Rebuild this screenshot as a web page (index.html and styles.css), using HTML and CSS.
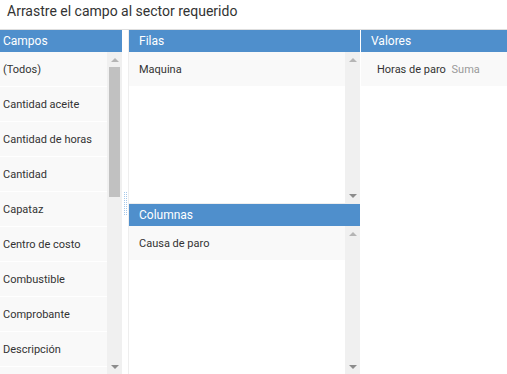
FILE: index.html
```html
<!DOCTYPE html>
<html lang="es">
<head>
<meta charset="utf-8">
<title>Field chooser</title>
<link rel="stylesheet" href="styles.css">
</head>
<body>
<div class="title">Arrastre el campo al sector requerido</div>
<div class="main">
  <section class="campos">
    <div class="hdr hdr-campos">Campos</div>
    <div class="body">
      <ul class="list list-campos">
        <li>(Todos)</li>
        <li>Cantidad aceite</li>
        <li>Cantidad de horas</li>
        <li>Cantidad</li>
        <li>Capataz</li>
        <li>Centro de costo</li>
        <li>Combustible</li>
        <li>Comprobante</li>
        <li>Descripción</li>
        <li class="empty"></li>
      </ul>
      <div class="sb">
        <div class="sb-btn"><span class="tri-up"></span></div>
        <div class="sb-track"><div class="sb-thumb"></div></div>
        <div class="sb-btn"><span class="tri-down"></span></div>
      </div>
    </div>
  </section>
  <div class="splitter"><span class="grip"></span></div>
  <section class="middle">
    <div class="area filas">
      <div class="hdr">Filas</div>
      <div class="body">
        <ul class="list list-area">
          <li>Maquina</li>
        </ul>
        <div class="sb">
          <div class="sb-btn"><span class="tri-up"></span></div>
          <div class="sb-track"></div>
          <div class="sb-btn"><span class="tri-down"></span></div>
        </div>
      </div>
    </div>
    <div class="area columnas">
      <div class="hdr">Columnas</div>
      <div class="body">
        <ul class="list list-area">
          <li>Causa de paro</li>
        </ul>
        <div class="sb">
          <div class="sb-btn"><span class="tri-up"></span></div>
          <div class="sb-track"></div>
          <div class="sb-btn"><span class="tri-down"></span></div>
        </div>
      </div>
    </div>
  </section>
  <section class="valores">
    <div class="hdr hdr-valores">Valores</div>
    <div class="body">
      <ul class="list list-valores">
        <li>Horas de paro <span class="summary">Suma</span></li>
      </ul>
    </div>
  </section>
</div>
</body>
</html>
```

FILE: styles.css
```css
* { box-sizing: border-box; }
html, body {
  margin: 0;
  padding: 0;
  width: 507px;
  height: 374px;
  overflow: hidden;
  background: #fff;
  font-family: Roboto, "Liberation Sans", sans-serif;
  color: #333;
}
.title {
  height: 30px;
  padding-left: 7px;
  font-size: 14px;
  line-height: 22px;
  border-bottom: 1px solid #dedede;
  color: #333;
}
.main {
  display: grid;
  grid-template-columns: 122px 6px 232px 1px 146px;
  grid-template-areas: "campos split middle gap valores";
  height: 344px;
}
.campos { grid-area: campos; display: flex; flex-direction: column; min-height: 0; }
.splitter { grid-area: split; display: flex; align-items: flex-start; padding-top: 162px; padding-left: 2px; }
.middle { grid-area: middle; border-left: 1px solid #eee; display: flex; flex-direction: column; min-height: 0; }
.valores { grid-area: valores; display: flex; flex-direction: column; }

.grip {
  display: block;
  width: 3px;
  height: 23px;
  background-image:
    linear-gradient(to right, transparent 1px, #fff 1px),
    linear-gradient(to bottom, #a6c8ea 1px, transparent 1px);
  background-size: 2px 2px;
}

.hdr {
  height: 22px;
  flex: none;
  background: #4f8fcc;
  color: #fff;
  font-size: 12px;
  line-height: 23px;
  padding-left: 10px;
}
.hdr-campos { padding-left: 3px; }

.body {
  flex: 1;
  display: flex;
  min-height: 0;
  overflow: hidden;
}
.list {
  list-style: none;
  margin: 0;
  padding: 0;
  flex: 1;
  min-width: 0;
  overflow: hidden;
}
.list li {
  height: 35px;
  padding-top: 2px;
  line-height: 32px;
  font-size: 11px;
  background: #f9f9f9;
  border-bottom: 1px solid #fff;
  white-space: nowrap;
  color: #333;
}
.list-campos li { padding-left: 3px; }
.list-area li { padding-left: 10px; }
.list-valores li { padding-left: 16px; }
.summary { color: #999; margin-left: 3px; }

.filas { flex: none; height: 174px; display: flex; flex-direction: column; border-bottom: 1px solid #eee; }
.columnas { flex: 1; display: flex; flex-direction: column; min-height: 0; }

.sb {
  width: 15px;
  flex: none;
  background: #f0f0f0;
  display: flex;
  flex-direction: column;
}
.sb-btn {
  height: 15px;
  flex: none;
  display: flex;
  align-items: center;
  justify-content: center;
}
.sb-track { flex: 1; padding: 0 2px; }
.sb-thumb { height: 130px; background: #c1c1c1; }
.tri-up {
  width: 0; height: 0;
  border-left: 4px solid transparent;
  border-right: 4px solid transparent;
  border-bottom: 4px solid #b5b5b5;
}
.tri-down {
  width: 0; height: 0;
  border-left: 4px solid transparent;
  border-right: 4px solid transparent;
  border-top: 4px solid #8c8c8c;
}
```
